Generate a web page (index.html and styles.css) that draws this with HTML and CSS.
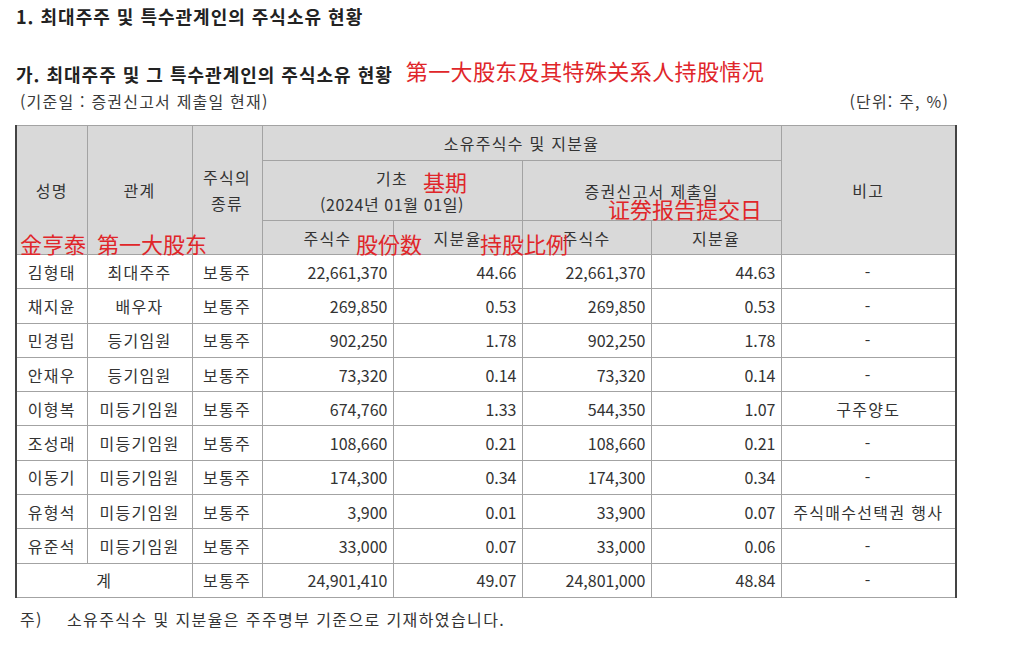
FILE: index.html
```html
<!DOCTYPE html>
<html lang="ko">
<head>
<meta charset="utf-8">
<title>최대주주 및 특수관계인의 주식소유 현황</title>
<link rel="stylesheet" href="styles.css">
</head>
<body>
<div class="page">
  <h1 class="title">1. 최대주주 및 특수관계인의 주식소유 현황</h1>
  <div class="subhead">
    <h2 class="subtitle">가. 최대주주 및 그 특수관계인의 주식소유 현황</h2>
    <span class="note-cn">第一大股东及其特殊关系人持股情况</span>
  </div>
  <div class="meta">
    <span>(기준일 : 증권신고서 제출일 현재)</span>
    <span>(단위: 주, %)</span>
  </div>
  <table class="holdings">
    <colgroup>
      <col class="c-name"><col class="c-rel"><col class="c-kind">
      <col class="c-n1"><col class="c-r1"><col class="c-n2"><col class="c-r2"><col class="c-memo">
    </colgroup>
    <thead>
      <tr class="hr1">
        <th rowspan="3">성명</th>
        <th rowspan="3">관계</th>
        <th rowspan="3">주식의<br>종류</th>
        <th colspan="4">소유주식수 및 지분율</th>
        <th rowspan="3">비고</th>
      </tr>
      <tr class="hr2">
        <th colspan="2">기초<br><span class="date">(2024년 01월 01일)</span></th>
        <th colspan="2">증권신고서 제출일</th>
      </tr>
      <tr class="hr3">
        <th>주식수</th><th>지분율</th><th>주식수</th><th>지분율</th>
      </tr>
    </thead>
    <tbody>
      <tr><td>김형태</td><td>최대주주</td><td>보통주</td><td class="num">22,661,370</td><td class="num">44.66</td><td class="num">22,661,370</td><td class="num">44.63</td><td>-</td></tr>
      <tr><td>채지윤</td><td>배우자</td><td>보통주</td><td class="num">269,850</td><td class="num">0.53</td><td class="num">269,850</td><td class="num">0.53</td><td>-</td></tr>
      <tr><td>민경립</td><td>등기임원</td><td>보통주</td><td class="num">902,250</td><td class="num">1.78</td><td class="num">902,250</td><td class="num">1.78</td><td>-</td></tr>
      <tr><td>안재우</td><td>등기임원</td><td>보통주</td><td class="num">73,320</td><td class="num">0.14</td><td class="num">73,320</td><td class="num">0.14</td><td>-</td></tr>
      <tr><td>이형복</td><td>미등기임원</td><td>보통주</td><td class="num">674,760</td><td class="num">1.33</td><td class="num">544,350</td><td class="num">1.07</td><td>구주양도</td></tr>
      <tr><td>조성래</td><td>미등기임원</td><td>보통주</td><td class="num">108,660</td><td class="num">0.21</td><td class="num">108,660</td><td class="num">0.21</td><td>-</td></tr>
      <tr><td>이동기</td><td>미등기임원</td><td>보통주</td><td class="num">174,300</td><td class="num">0.34</td><td class="num">174,300</td><td class="num">0.34</td><td>-</td></tr>
      <tr><td>유형석</td><td>미등기임원</td><td>보통주</td><td class="num">3,900</td><td class="num">0.01</td><td class="num">33,900</td><td class="num">0.07</td><td>주식매수선택권 행사</td></tr>
      <tr><td>유준석</td><td>미등기임원</td><td>보통주</td><td class="num">33,000</td><td class="num">0.07</td><td class="num">33,000</td><td class="num">0.06</td><td>-</td></tr>
      <tr><td colspan="2">계</td><td>보통주</td><td class="num">24,901,410</td><td class="num">49.07</td><td class="num">24,801,000</td><td class="num">48.84</td><td>-</td></tr>
    </tbody>
  </table>
  <p class="footnote"><span class="fn-mark">주)</span><span>소유주식수 및 지분율은 주주명부 기준으로 기재하였습니다.</span></p>

  <span class="tag tag-name">金亨泰</span>
  <span class="tag tag-rel">第一大股东</span>
  <span class="tag tag-base">基期</span>
  <span class="tag tag-date">证券报告提交日</span>
  <span class="tag tag-shares">股份数</span>
  <span class="tag tag-ratio">持股比例</span>
</div>
</body>
</html>
```

FILE: styles.css
```css
* { box-sizing: border-box; }

html, body {
  margin: 0;
  padding: 0;
  background: #ffffff;
}

body {
  font-family: "Noto Sans CJK KR", "Noto Sans", sans-serif;
  color: #333333;
  font-size: 16px;
}

.page {
  position: relative;
  padding: 4px 15px 0 15px;
  width: 1024px;
  height: 646px;
  overflow: hidden;
}

.title {
  margin: 0;
  font-size: 18px;
  line-height: 24px;
  font-weight: 700;
  color: #222222;
  padding-left: 1px;
  letter-spacing: 1px;
}

.subhead {
  margin-top: 29px;
  display: flex;
  align-items: baseline;
  gap: 13px;
  height: 30px;
  line-height: 30px;
}

.subtitle {
  margin: 0;
  font-size: 18px;
  font-weight: 700;
  color: #222222;
  padding-left: 1px;
  letter-spacing: 1px;
}

.note-cn {
  font-family: "Noto Sans CJK SC", sans-serif;
  font-size: 22px;
  color: #e0262a;
  font-weight: 400;
  letter-spacing: 0.4px;
  position: relative;
  top: -2px;
}

.meta {
  margin-top: 4px;
  width: 940px;
  display: flex;
  justify-content: space-between;
  padding: 0 6px 0 5px;
  font-size: 16px;
  line-height: 20px;
  color: #3a3a3a;
  letter-spacing: 1.2px;
}

.holdings {
  margin-top: 14px;
  width: 940px;
  table-layout: fixed;
  border-collapse: collapse;
  border-top: 1px solid #444444;
  border-bottom: 1px solid #444444;
  border-left: 2px solid #444444;
  border-right: 2px solid #444444;
  font-size: 16px;
  color: #333333;
}

.c-name { width: 71px; }
.c-rel { width: 105px; }
.c-kind { width: 70px; }
.c-n1 { width: 131px; }
.c-r1 { width: 129px; }
.c-n2 { width: 129px; }
.c-r2 { width: 130px; }
.c-memo { width: 175px; }

.holdings th,
.holdings td {
  border: 1px solid #a3a3a3;
  padding: 0 4px;
  text-align: center;
  vertical-align: middle;
  white-space: nowrap;
  letter-spacing: 1.3px;
}

.holdings th {
  background: #d9d9d9;
  font-weight: 400;
  line-height: 26px;
}

.holdings th .date {
  letter-spacing: 0.6px;
}

.hr1 th { height: 35px; }
.hr2 th { height: 60px; }
.hr3 th { height: 34px; }

.holdings td {
  height: 34.3px;
  line-height: 20px;
}

.holdings td.num {
  text-align: right;
  padding-right: 5px;
  letter-spacing: 0;
}

.footnote {
  margin: 11px 0 0 0;
  display: flex;
  gap: 24px;
  padding-left: 5px;
  font-size: 16px;
  line-height: 20px;
  color: #333333;
  letter-spacing: 1.4px;
}

.tag {
  position: absolute;
  font-family: "Noto Sans CJK SC", sans-serif;
  font-size: 22px;
  line-height: 22px;
  color: #e0262a;
  white-space: nowrap;
}

.tag-name { left: 20px; top: 232px; }
.tag-rel { left: 97px; top: 232px; }
.tag-base { left: 423px; top: 170px; }
.tag-date { left: 608px; top: 197px; }
.tag-shares { left: 356px; top: 232px; }
.tag-ratio { left: 480px; top: 232px; }
```
